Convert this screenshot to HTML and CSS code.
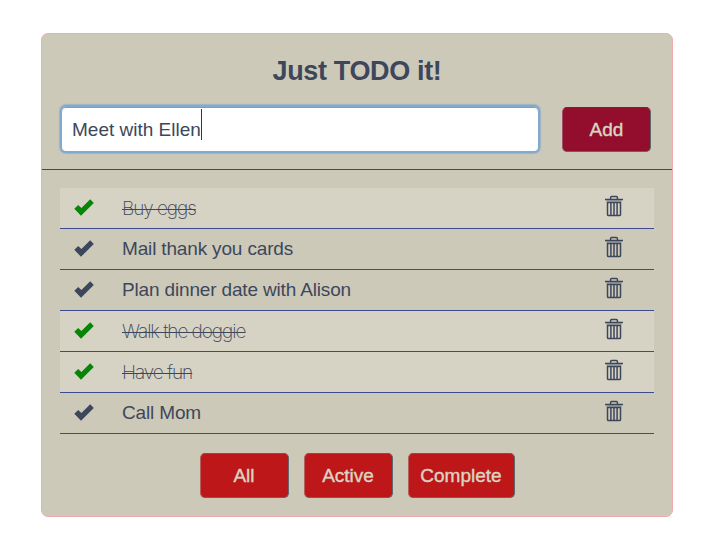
FILE: index.html
```
<!DOCTYPE html>
<html lang="en">
<head>
<meta charset="utf-8">
<title>Just TODO it!</title>
<link rel="stylesheet" href="styles.css">
</head>
<body>
<svg width="0" height="0" class="sprite">
  <symbol id="check" viewBox="0 0 20 17"><path d="M.3 9.8 4.2 6 7.4 9.1 16.2.2 19.8 4 7 16.8Z"/></symbol>
  <symbol id="trash" viewBox="0 0 18 22"><path fill="none" stroke="currentColor" stroke-width="1.5" d="M0 4.5H18M5.6 4.3V2.4Q5.6 1.4 6.6 1.4H11.4Q12.4 1.4 12.4 2.4V4.3M2.5 7.5H15.5V19.4Q15.5 20.5 14.4 20.5H3.6Q2.5 20.5 2.5 19.4ZM5.9 8V20M9 8V20M12.1 8V20"/><path opacity=".3" d="M1.5 5H16.5V7H1.5Z"/></symbol>
</svg>
<main class="card">
  <header class="top">
    <h1>Just TODO it!</h1>
    <form class="entry">
      <div class="field"><span>Meet with Ellen</span><i class="caret"></i></div>
      <button type="button" class="btn add">Add</button>
    </form>
  </header>
  <ul class="list">
    <li class="done"><svg class="check"><use href="#check"/></svg><span class="label">Buy eggs</span><svg class="trash"><use href="#trash"/></svg></li>
    <li><svg class="check"><use href="#check"/></svg><span class="label">Mail thank you cards</span><svg class="trash"><use href="#trash"/></svg></li>
    <li><svg class="check"><use href="#check"/></svg><span class="label">Plan dinner date with Alison</span><svg class="trash"><use href="#trash"/></svg></li>
    <li class="done"><svg class="check"><use href="#check"/></svg><span class="label">Walk the doggie</span><svg class="trash"><use href="#trash"/></svg></li>
    <li class="done"><svg class="check"><use href="#check"/></svg><span class="label">Have fun</span><svg class="trash"><use href="#trash"/></svg></li>
    <li><svg class="check"><use href="#check"/></svg><span class="label">Call Mom</span><svg class="trash"><use href="#trash"/></svg></li>
  </ul>
  <nav class="filters">
    <button type="button" class="btn">All</button>
    <button type="button" class="btn">Active</button>
    <button type="button" class="btn wide">Complete</button>
  </nav>
</main>
</body>
</html>
```
FILE: styles.css
```
* { box-sizing: border-box; }
body {
  margin: 0;
  padding: 33px 41px;
  background: #fff;
  color: #3d475c;
  font: 19px/40px "Liberation Sans", Arial, sans-serif;
}
.sprite { position: absolute; }
.card {
  width: 632px;
  height: 484px;
  border: 1px solid #efabad;
  border-radius: 7px;
  background: #cdc9b8;
}
.top {
  height: 136px;
  padding: 17px 18px 0;
  border-bottom: 1px solid #bd1719;
}
h1 {
  margin: 0;
  font-size: 27px;
  line-height: 40px;
  text-align: center;
  letter-spacing: -0.35px;
}
.entry { display: flex; margin-top: 16px; }
.field {
  display: flex;
  width: 476px;
  height: 44px;
  margin: 0 24px 0 2px;
  padding: 0 0 0 10px;
  border-radius: 4px;
  background: #fff;
  box-shadow: inset 0 1px #9298a1, 0 0 0 2px #82aace, 0 0 1px 3px #9db4c2;
  line-height: 45px;
  letter-spacing: 0;
}
.caret { width: 1px; height: 31px; margin-top: 2px; background: #303746; }
.btn {
  width: 89px;
  height: 45px;
  padding: 0;
  border: 1px solid;
  border-color: #a6403c #64656a #64656a #b5605b;
  border-radius: 5px;
  background: #bd1719;
  color: #d9d4c3;
  font: 19px "Liberation Sans", Arial, sans-serif;
  -webkit-text-stroke: 0.4px;
}
.wide { width: 107px; }
.add { border-color: #7d2138 #64656a #64656a #a0506a; background: #930d2c; }
.list { margin: 18px 18px 0; padding: 0; list-style: none; }
.list li {
  display: flex;
  height: 41px;
  padding-left: 14px;
  border-bottom: 1px solid #3d4a91;
}
.done { background: #d6d3c4; }
.check { width: 20px; height: 17px; margin: 11px 28px 0 0; fill: #3d475c; }
.done .check { fill: #078507; }
.label { line-height: 40px; letter-spacing: -0.16px; }
.done .label {
  font-family: Inter, Roboto, sans-serif;
  font-weight: 200;
  line-height: 41px;
  text-decoration: line-through 1px;
  letter-spacing: -1.05px;
}
.trash { width: 18px; height: 22px; margin: 7px 31px 0 auto; fill: currentColor; }
.filters { display: flex; justify-content: center; gap: 15px; margin-top: 19px; }
```
